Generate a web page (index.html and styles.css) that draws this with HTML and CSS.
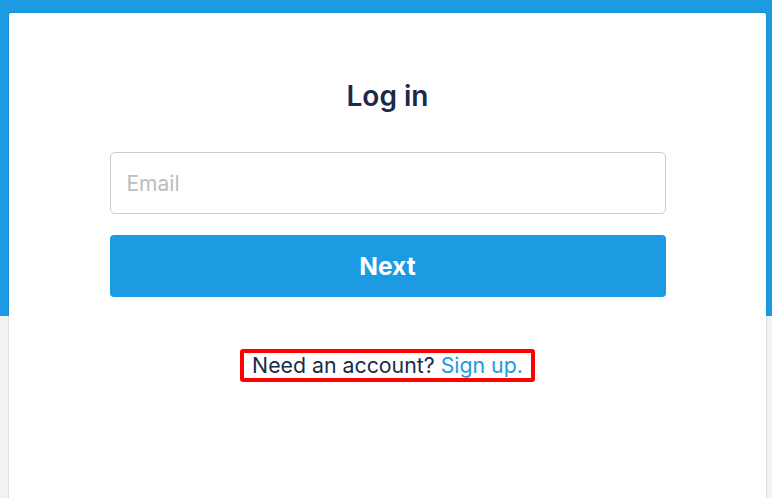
FILE: index.html
```html
<!DOCTYPE html>
<html>
<head>
<meta charset="utf-8">
<link rel="stylesheet" href="styles.css">
</head>
<body>
<div class="page">
  <main class="card">
    <h1 class="title">Log in</h1>
    <form class="form">
      <input class="input" type="text" placeholder="Email">
      <button class="btn" type="button">Next</button>
    </form>
    <div class="signup-row">
      <p class="signup">Need an account? <a class="link" href="#">Sign up.</a></p>
    </div>
  </main>
</div>
</body>
</html>
```
FILE: styles.css
```css
* { box-sizing: border-box; }
html, body { margin: 0; padding: 0; height: 100%; }
body {
  font-family: Inter, "Noto Sans", "Liberation Sans", sans-serif;
  background: linear-gradient(to bottom, #1d9be2 0, #1d9be2 316px, #f1f2f4 316px);
  overflow: hidden;
}
.page {
  height: 100%;
  padding: 13px 6px 0 9px;
}
.card {
  background: #ffffff;
  height: 100%;
  border-radius: 2px 2px 0 0;
  box-shadow: 0 0 1px 1px rgba(0, 0, 0, 0.08);
  display: flex;
  flex-direction: column;
  align-items: center;
  padding-top: 66px;
}
.title {
  margin: 0;
  font-size: 28px;
  line-height: 34px;
  font-weight: 600;
  color: #1b2a4c;
}
.form {
  margin-top: 39px;
  width: 556px;
  display: flex;
  flex-direction: column;
  gap: 21px;
}
.input {
  height: 62px;
  border: 1px solid #cccccc;
  border-radius: 5px;
  padding: 0 16px;
  font-family: inherit;
  font-size: 21px;
  color: #1b2a4c;
  outline: none;
}
.input::placeholder { color: #bdbdbd; }
.btn {
  height: 62px;
  border: none;
  border-radius: 4px;
  background: #1d9be2;
  color: #ffffff;
  font-family: inherit;
  font-size: 24.5px;
  font-weight: 700;
}
.signup-row {
  margin-top: 52px;
}
.signup {
  margin: 0;
  font-size: 21.3px;
  line-height: 25px;
  color: #1b2a4c;
  border: 4px solid #ff0000;
  border-radius: 3px;
  padding: 0 8px;
}
.link {
  color: #1d9be2;
  text-decoration: none;
}
```
